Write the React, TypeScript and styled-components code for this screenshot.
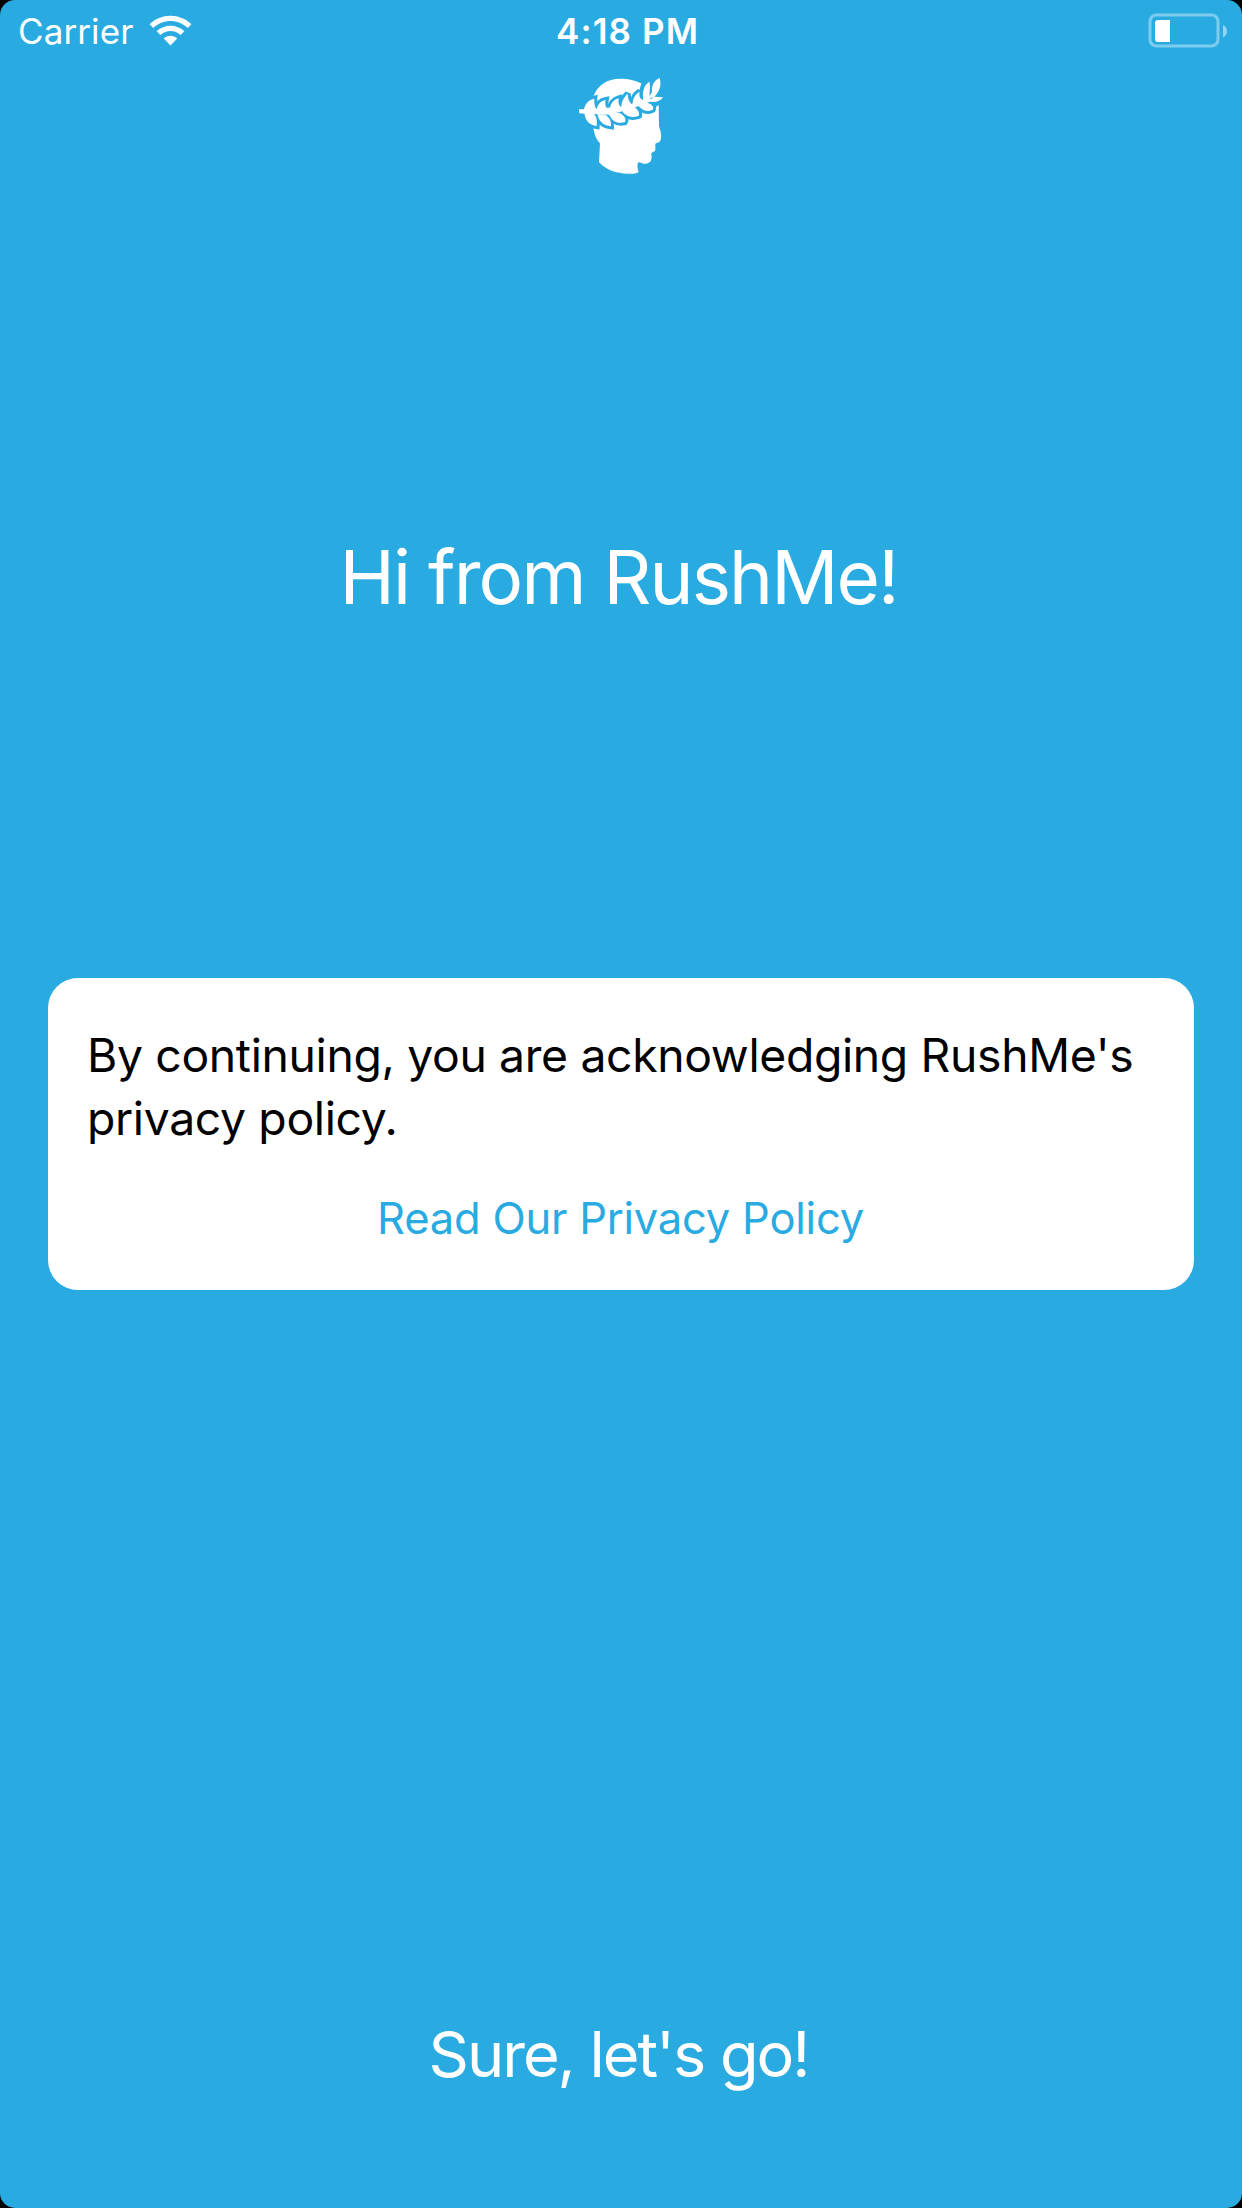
import React from 'react';
import styled, { createGlobalStyle } from 'styled-components';

const BLUE = '#29abe2';

const GlobalStyle = createGlobalStyle`
  body { margin: 0; background: #000; }
  *, *::before, *::after { box-sizing: border-box; }
`;

const Screen = styled.div`
  width: 1242px;
  height: 2208px;
  display: flex;
  flex-direction: column;
  align-items: center;
  overflow: hidden;
  border-radius: 15px;
  background: ${BLUE};
  font-family: Inter, "Liberation Sans", sans-serif;
  color: #fff;
`;

const StatusBar = styled.header`
  width: 100%;
  height: 60px;
  display: grid;
  grid-template-columns: 1fr auto 1fr;
  align-items: center;
  padding: 0 15px 0 18px;
`;

const StatusLeft = styled.div`
  display: flex;
  align-items: center;
  gap: 16px;
`;

const StatusText = styled.span<{ $weight: number; $spacing: number }>`
  font-size: 35px;
  line-height: 62px;
  font-weight: ${(p) => p.$weight};
  letter-spacing: ${(p) => p.$spacing}px;
  white-space: nowrap;
`;

const Time = styled.div`
  padding-left: 10px;
`;

const StatusRight = styled.div`
  display: flex;
  justify-content: flex-end;
  padding-bottom: 1px;
`;

const Icon = styled.svg`
  display: block;
`;

const LogoRow = styled.div`
  height: 120px;
  margin-top: 6px;
  padding-left: 2px;
`;

const Title = styled.h1`
  margin: 341px 0 0;
  padding-right: 5px;
  font-size: 74.5px;
  line-height: 100px;
  font-weight: 400;
  letter-spacing: -1.95px;
  white-space: nowrap;
`;

const Card = styled.section`
  width: 1146px;
  height: 312px;
  margin-top: 351px;
  padding: 46px 40px 0 39px;
  display: flex;
  flex-direction: column;
  align-items: center;
  border-radius: 30px;
  background: #fff;
`;

const Notice = styled.p`
  margin: 0;
  width: 100%;
  font-size: 46.3px;
  line-height: 63px;
  letter-spacing: -0.34px;
  color: #000;
`;

const PlainButton = styled.button`
  padding: 0;
  border: 0;
  background: none;
  font-family: inherit;
  cursor: pointer;
  white-space: nowrap;
`;

const PolicyLink = styled(PlainButton)`
  margin-top: 37px;
  font-size: 43.5px;
  line-height: 63px;
  letter-spacing: -0.22px;
  color: ${BLUE};
`;

const ContinueButton = styled(PlainButton)`
  margin-top: 724px;
  padding-right: 5px;
  font-size: 63px;
  line-height: 80px;
  letter-spacing: -2px;
  color: #fff;
`;

const Wifi = () => (
  <Icon width="43" height="32" viewBox="0 0 43 32" fill="#fff">
    <path d="M.6 9.3C12.3 -2.2 30.7 -2.2 42.4 9.3L38.7 13C29 3.7 14 3.7 4.3 13Z" />
    <path d="M7.6 16.2C15.4 8.8 27.6 8.8 35.4 16.2L31.5 20C25.8 14.8 17.2 14.8 11.5 20Z" />
    <path d="M14.8 23.4C18.6 20 24.4 20 28.2 23.4L21.5 30.5Z" />
  </Icon>
);

const Battery = () => (
  <Icon width="80" height="35" viewBox="0 0 80 35">
    <rect x="3" y="2" width="68" height="31" rx="6.5" fill="none" stroke="#fff" strokeOpacity=".4" strokeWidth="3" />
    <path d="M11 7H23V29H11A3 3 0 0 1 8 26V10A3 3 0 0 1 11 7Z" fill="#fff" />
    <path d="M76 12Q80 14.5 80 18.2T76 24.5Z" fill="#fff" fillOpacity=".5" />
  </Icon>
);

const HEAD =
  'M70 92C82 57 112 38 151 38C177 38 197 44 214 52L206 80L240 122L256 124L266 117L267 180C269 190 273 196 273 206C274 218 273 228 262 230L256 233L256 252C254 258 245 258 244 263C243 268 247 272 244 279C242 290 232 294 222 293C216 293 211 287 205 289C200 296 203 308 206 317C203 321 195 323 180 323C145 325 107 312 87 289L90 232C78 220 73 205 70 184Z';

// Stem first, then the upper leaves and the lower leaves from left to right.
const WREATH = [
  'M27 130L45 130L160 122L240 94L244 106L190 126L120 146L43 143L28 142Z',
  'M73 98C55 102 44 114 42 132L82 134C74 124 72 112 73 98Z',
  'M107 102C90 105 82 116 80 134L120 134C106 126 104 116 107 102Z',
  'M146 97C128 102 121 114 119 134L158 128C146 120 144 110 146 97Z',
  'M173 83C160 96 153 108 154 128L190 118C180 112 174 102 173 83Z',
  'M209 77C194 86 188 98 188 116L226 104C210 100 206 92 209 77Z',
  'M238 47C222 58 216 74 220 104L240 96C236 82 243 66 238 47Z',
  'M269 36C252 44 244 58 246 78L236 96L252 94C270 74 275 58 269 36Z',
  'M43 140C45 162 56 176 80 180C81 164 81 152 71 143Z',
  'M82 144C87 166 98 178 123 181C124 164 118 154 106 146Z',
  'M116 143C126 164 138 174 164 169C171 158 162 148 148 140Z',
  'M156 136C170 152 184 158 207 149C209 138 204 130 192 122Z',
  'M203 118C216 132 228 140 248 131C252 122 248 116 232 110Z',
  'M234 106C254 112 270 106 279 94L252 92Z',
];

const Logo = () => (
  <Icon width="104" height="120" viewBox="0 0 312 360" fill="#fff">
    <path d={HEAD} />
    <g fill={BLUE} stroke={BLUE} strokeWidth="18" strokeMiterlimit="2.4">
      {WREATH.map((d) => <path key={d} d={d} />)}
    </g>
    {WREATH.map((d) => <path key={d} d={d} />)}
  </Icon>
);

export default function App() {
  return (
    <>
      <GlobalStyle />
      <Screen>
        <StatusBar>
          <StatusLeft>
            <StatusText $weight={400} $spacing={0.1}>Carrier</StatusText>
            <Wifi />
          </StatusLeft>
          <Time>
            <StatusText $weight={600} $spacing={1.1}>4:18 PM</StatusText>
          </Time>
          <StatusRight>
            <Battery />
          </StatusRight>
        </StatusBar>
        <LogoRow>
          <Logo />
        </LogoRow>
        <Title>Hi from RushMe!</Title>
        <Card>
          <Notice>By continuing, you are acknowledging RushMe's privacy policy.</Notice>
          <PolicyLink>Read Our Privacy Policy</PolicyLink>
        </Card>
        <ContinueButton>Sure, let's go!</ContinueButton>
      </Screen>
    </>
  );
}
